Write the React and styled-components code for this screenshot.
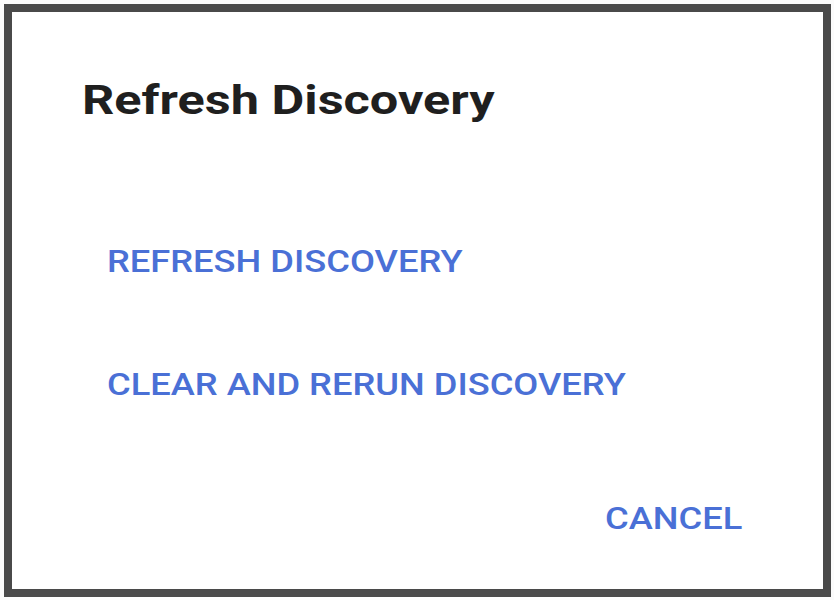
import React from "react";
import styled, { createGlobalStyle } from "styled-components";

const GlobalStyle = createGlobalStyle`
  html, body {
    margin: 0;
    padding: 0;
    background: #fbfbfb;
    font-family: Roboto, "Liberation Sans", Arial, sans-serif;
  }
`;

const Page = styled.div`
  width: 834px;
  height: 600px;
  box-sizing: border-box;
  padding: 4px 3px 3px 4px;
`;

const Dialog = styled.div`
  box-sizing: border-box;
  width: 100%;
  height: 100%;
  background: #ffffff;
  border: 8px solid #4a4a4a;
  display: flex;
  flex-direction: column;
  padding: 68px 81px 0 70px;
`;

// the capture is stretched sideways, so glyphs get a horizontal scale
const Title = styled.h2`
  align-self: flex-start;
  margin: 0;
  font-size: 41px;
  line-height: 41px;
  font-weight: 700;
  color: #1f1f1f;
  transform: scaleX(1.23);
  transform-origin: left center;
`;

const Actions = styled.div`
  display: flex;
  flex-direction: column;
  align-items: flex-start;
  gap: 92px;
  margin-top: 125px;
  padding-left: 25px;
`;

const Footer = styled.div`
  display: flex;
  justify-content: flex-end;
  margin-top: 103px;
`;

const TextButton = styled.button`
  padding: 0;
  border: none;
  background: none;
  font-family: Roboto, "Liberation Sans", Arial, sans-serif;
  font-size: 31px;
  line-height: 31px;
  font-weight: 500;
  color: #4a70d6;
  text-transform: uppercase;
  cursor: pointer;
  transform: scaleX(1.17);
  transform-origin: ${(p) => (p.$alignEnd ? "right" : "left")} center;
`;

const App = () => {
  return (
    <React.Fragment>
      <GlobalStyle />
      <Page>
        <Dialog>
          <Title>Refresh Discovery</Title>
          <Actions>
            <TextButton>Refresh Discovery</TextButton>
            <TextButton>Clear and Rerun Discovery</TextButton>
          </Actions>
          <Footer>
            <TextButton $alignEnd>Cancel</TextButton>
          </Footer>
        </Dialog>
      </Page>
    </React.Fragment>
  );
};

export default App;
